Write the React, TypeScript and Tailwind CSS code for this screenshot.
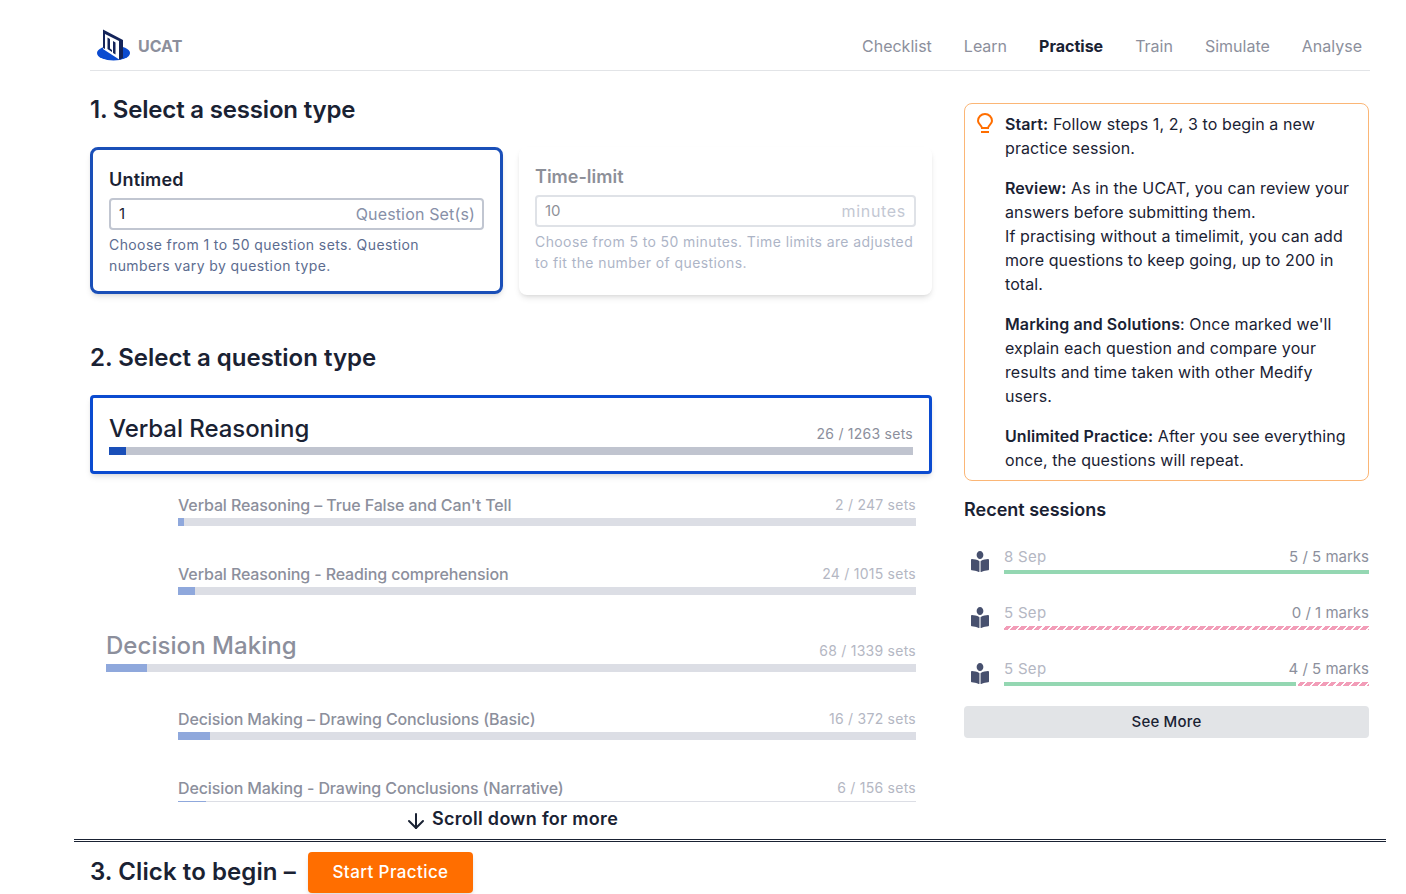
import { ArrowDown } from "lucide-react";
import { FaBookReader } from "react-icons/fa";

const navItems = ["Checklist", "Learn", "Practise", "Train", "Simulate", "Analyse"];

const sections = [
  {
    title: "Decision Making",
    done: 68,
    total: 1339,
    children: [
      { title: "Decision Making – Drawing Conclusions (Basic)", done: 16, total: 372 },
      { title: "Decision Making - Drawing Conclusions (Narrative)", done: 6, total: 156 },
    ],
  },
];

const verbalChildren = [
  { title: "Verbal Reasoning – True False and Can't Tell", done: 2, total: 247 },
  { title: "Verbal Reasoning - Reading comprehension", done: 24, total: 1015 },
];

const sessions = [
  { date: "8 Sep", marks: 5, total: 5 },
  { date: "5 Sep", marks: 0, total: 1 },
  { date: "5 Sep", marks: 4, total: 5 },
];

function Logo() {
  return (
    <svg width="34" height="34" viewBox="0 0 34 34" className="shrink-0">
      <ellipse cx="16.5" cy="24" rx="16.5" ry="7.5" fill="#0b4bd0" />
      <path d="M6 1 L23 10 V31 L6 20 Z" fill="#ffffff" />
      <path d="M6 0.5 L26 11 V29 L22 31 V12 L8 5 V20 L6 19 Z" fill="#14245a" />
      <path d="M10.5 8.5 L13 10 V19.5 L15 21 V23 L10.5 20 Z M16 12 L18.5 13.5 V25.5 L16 24 Z" fill="#14245a" />
    </svg>
  );
}

function Bulb() {
  return (
    <svg width="16" height="20" viewBox="0 0 16 20" fill="none" stroke="#ff6e00" strokeWidth="2" className="mt-px shrink-0">
      <path d="M5 15 C5 12.5 1 11 1 8 a7 7 0 0 1 14 0 C15 11 11 12.5 11 15 Z" />
      <path d="M4 19 H12" />
    </svg>
  );
}

function SubRow({ title, done, total }: { title: string; done: number; total: number }) {
  return (
    <div className="ml-[88px] mr-4 h-[69px] shrink-0">
      <div className="flex h-[26px] items-center justify-between">
        <span className="text-base font-medium tracking-[-0.12px] text-[#8c8f9c]">{title}</span>
        <span className="text-sm tracking-[0.25px] text-[#b4b7c3]">
          {done} / {total} sets
        </span>
      </div>
      <div className="h-2 bg-[#dcdee5]">
        <div className="h-full bg-[#8fa8dc]" style={{ width: `${(done / total) * 100}%` }} />
      </div>
    </div>
  );
}

function SessionRow({ date, marks, total }: { date: string; marks: number; total: number }) {
  const pct = (marks / total) * 100;
  return (
    <div className="flex h-14 items-start pl-[7px]">
      <FaBookReader preserveAspectRatio="none" className="mt-[9px] h-[21px] w-[18px] shrink-0 text-[#47506e]" />
      <div className="ml-[15px] flex-1">
        <div className="flex h-[28px] items-center justify-between pt-[2px] text-[15px]">
          <span className="tracking-[0.3px] text-[#b4b7c3]">{date}</span>
          <span className="text-[#8c8f9c]">
            {marks} / {total} marks
          </span>
        </div>
        <div className="flex h-1 gap-[2px]">
          {marks > 0 && <div className="h-full bg-[#94d7b2]" style={{ width: `${pct}%` }} />}
          {marks < total && (
            <div className="h-full flex-1 bg-[repeating-linear-gradient(135deg,#ffffff_0,#ffffff_1.5px,#f29db8_1.5px,#f29db8_5.5px)]" />
          )}
        </div>
      </div>
    </div>
  );
}

export default function App() {
  return (
    <div className="h-[894px] w-[1406px] overflow-hidden bg-white font-['Inter',sans-serif] text-[#1a2233]">
      <div className="ml-[90px] w-[1280px]">
        <header className="flex h-[71px] items-center justify-between border-b border-[#e2e4e7] pl-[7px] pr-2 pt-[21px]">
          <div className="flex items-center gap-[7px]">
            <Logo />
            <span className="text-base font-bold text-[#8c8f9c]">UCAT</span>
          </div>
          <nav className="flex items-center gap-8">
            {navItems.map((item) => (
              <a
                key={item}
                className={
                  item === "Practise"
                    ? "text-base font-bold text-[#1a2233]"
                    : "text-base text-[#8c8f9c]"
                }
              >
                {item}
              </a>
            ))}
          </nav>
        </header>

        <div className="flex gap-8">
          <div className="-mx-4 h-[731px] w-[874px] shrink-0 overflow-hidden px-4">
            <h2 className="mt-[23px] text-2xl font-semibold leading-8 tracking-[-0.18px]">1. Select a session type</h2>
            <div className="mt-[21px] flex gap-4">
              <div className="h-[147px] w-[413px] rounded-lg border-[3px] border-[#1a4fb8] px-4 pt-[18px] shadow-md">
                <h3 className="text-lg font-semibold leading-6 tracking-[0.2px]">Untimed</h3>
                <div className="mt-[6px] flex h-8 items-center justify-between rounded border-2 border-[#c1c6d1] pl-2 pr-[7px] text-base">
                  <span className="pt-px text-[15px]">1</span>
                  <span className="tracking-[0.15px] text-[#8790a8]">Question Set(s)</span>
                </div>
                <p className="mt-1 max-w-[340px] text-sm leading-[21px] tracking-[0.4px] text-[#5c6c8f]">
                  Choose from 1 to 50 question sets. Question numbers vary by question type.
                </p>
              </div>
              <div className="h-[148px] w-[413px] rounded-lg px-4 pt-[18px] shadow-md">
                <div className="opacity-50">
                  <h3 className="text-lg font-semibold leading-6">Time-limit</h3>
                  <div className="mt-[6px] flex h-8 items-center justify-between rounded border-2 border-[#c1c6d1] px-2 text-base">
                    <span className="pt-px text-[15px]">10</span>
                    <span className="tracking-[0.7px] text-[#8790a8]">minutes</span>
                  </div>
                  <p className="mt-1 text-sm leading-[21px] tracking-[0.4px] text-[#5c6c8f]">
                    Choose from 5 to 50 minutes. Time limits are adjusted to fit the number of questions.
                  </p>
                </div>
              </div>
            </div>

            <h2 className="mt-[47px] text-2xl font-semibold leading-8">2. Select a question type</h2>
            <div className="mt-[21px] h-[79px] rounded border-[3px] border-[#0b4bd0] px-4 pt-4 shadow-md">
              <div className="flex h-[33px] items-end justify-between">
                <span className="pb-[2px] text-2xl font-medium leading-8 tracking-[-0.05px]">Verbal Reasoning</span>
                <span className="pb-[3px] text-sm tracking-[0.25px] text-[#8c8f9c]">26 / 1263 sets</span>
              </div>
              <div className="h-2 bg-[#c0c4cf]">
                <div className="h-full bg-[#1a4fb8]" style={{ width: `${(26 / 1263) * 100}%` }} />
              </div>
            </div>
            <div className="mt-[18px]">
              {verbalChildren.map((row) => (
                <SubRow key={row.title} {...row} />
              ))}
            </div>
            {sections.map((s) => (
              <div key={s.title}>
                <div className="mx-4">
                  <div className="flex h-[34px] items-end justify-between">
                    <span className="pb-[2px] text-2xl font-medium leading-8 tracking-[0.05px] text-[#8c8f9c]">{s.title}</span>
                    <span className="pb-[3px] text-sm tracking-[0.25px] text-[#b4b7c3]">
                      {s.done} / {s.total} sets
                    </span>
                  </div>
                  <div className="h-2 bg-[#dcdee5]">
                    <div className="h-full bg-[#8fa8dc]" style={{ width: `${(s.done / s.total) * 100}%` }} />
                  </div>
                </div>
                <div className="mt-[34px]">
                  {s.children.map((row) => (
                    <SubRow key={row.title} {...row} />
                  ))}
                </div>
              </div>
            ))}
          </div>

          <aside className="mt-8 w-[405px] shrink-0">
            <div className="flex h-[378px] gap-3 rounded-lg border border-[#fbb676] pl-3 pr-2 pt-2 text-base leading-6 tracking-[0.1px]">
              <Bulb />
              <div className="w-[350px] space-y-4">
                <p>
                  <b className="font-semibold">Start:</b> Follow steps 1, 2, 3 to begin a new practice session.
                </p>
                <p>
                  <b className="font-semibold">Review:</b> As in the UCAT, you can review your answers before submitting them.
                  <br />
                  If practising without a timelimit, you can add more questions to keep going, up to 200 in total.
                </p>
                <p>
                  <b className="font-semibold">Marking and Solutions</b>: Once marked we'll explain each question and compare your results and time taken with other Medify users.
                </p>
                <p>
                  <b className="font-semibold">Unlimited Practice:</b> After you see everything once, the questions will repeat.
                </p>
              </div>
            </div>
            <h3 className="mt-[17px] text-lg font-semibold leading-6">Recent sessions</h3>
            <div className="mt-5">
              {sessions.map((s, i) => (
                <SessionRow key={i} {...s} />
              ))}
            </div>
            <button className="-mt-1 block h-8 w-full rounded bg-[#e2e4e7] text-[15px] font-medium tracking-[0.2px]">See More</button>
          </aside>
        </div>

        <div className="h-[37px] w-[842px]">
          <div className="flex h-[34px] items-center justify-center gap-1 text-lg font-semibold tracking-[0.3px]">
            <ArrowDown className="mt-1 h-6 w-6" strokeWidth={2} />
            <span>Scroll down for more</span>
          </div>
        </div>

        <footer className="-mx-4 w-[1312px] border-t-[3px] border-double border-[#1a2233] pl-4 pt-[10px]">
          <div className="flex items-center gap-[10px]">
            <span className="w-[208px] pb-[2px] text-2xl font-semibold tracking-[0.1px]">3. Click to begin –</span>
            <button className="h-[41px] w-[165px] rounded bg-[#ff6e00] pt-px text-[17px] font-medium tracking-[0.4px] text-white shadow-md">
              Start Practice
            </button>
          </div>
        </footer>
      </div>
    </div>
  );
}
